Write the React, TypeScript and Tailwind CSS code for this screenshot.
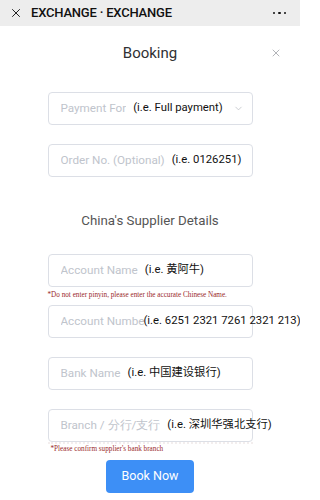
import { ChevronDown, X } from "lucide-react";

type Field = {
  label: string;
  hint: string;
  labelWidth?: string;
  gap?: string;
  chevron?: boolean;
  note?: string;
  top: string;
};

const ORDER_FIELDS: Field[] = [
  { label: "Payment For", hint: "(i.e. Full payment)", chevron: true, top: "mt-[28px]" },
  { label: "Order No. (Optional)", hint: "(i.e. 0126251)", top: "mt-[19px]" },
];

const SUPPLIER_FIELDS: Field[] = [
  {
    label: "Account Name",
    hint: "(i.e. 黄阿牛)",
    note: "*Do not enter pinyin, please enter the accurate Chinese Name.",
    top: "mt-[23px]",
  },
  {
    label: "Account Number",
    hint: "(i.e. 6251 2321 7261 2321 213)",
    labelWidth: "w-[83px]",
    gap: "ml-0",
    top: "mt-[5px]",
  },
  { label: "Bank Name", hint: "(i.e. 中国建设银行)", top: "mt-[19px]" },
  { label: "Branch / 分行/支行", hint: "(i.e. 深圳华强北支行)", top: "mt-[19px]" },
];

function InputRow({ field }: { field: Field }) {
  return (
    <div className={`${field.top} w-[205px]`}>
      <div className="relative flex h-[33px] items-center rounded-[4px] border border-[#dcdfe6] bg-white pl-[12px]">
        <span
          className={`shrink-0 overflow-hidden whitespace-nowrap text-[11.7px] text-[#c0c4cc] ${field.labelWidth ?? ""}`}
        >
          {field.label}
        </span>
        <span
          className={`${field.gap ?? "ml-[7px]"} whitespace-nowrap font-['Roboto','Noto_Sans_CJK_SC',sans-serif] text-[11.3px] text-[#111]`}
        >
          {field.hint}
        </span>
        {field.chevron && (
          <ChevronDown className="ml-auto mr-[8px] h-[11px] w-[11px] text-[#b4b7bd]" strokeWidth={1.5} />
        )}
      </div>
      {field.note && (
        <p className="mt-[3px] whitespace-nowrap font-['Liberation_Serif',serif] text-[7.2px] leading-[10px] text-[#9a2a2a]">
          {field.note}
        </p>
      )}
    </div>
  );
}

export default function App() {
  return (
    <div className="relative h-[500px] w-[300px] overflow-hidden bg-white font-['Roboto',sans-serif]">
      {/* Top bar */}
      <header className="flex h-[26px] items-center bg-[#ededed] pl-[9px] pr-[14px]">
        <X className="h-[14px] w-[14px] text-[#111]" strokeWidth={1.6} />
        <span className="ml-[8px] text-[13px] font-medium tracking-[-0.2px] text-[#111]">
          EXCHANGE · EXCHANGE
        </span>
        <span className="ml-auto flex gap-[3px]">
          <span className="h-[2.5px] w-[2.5px] rounded-full bg-[#111]" />
          <span className="h-[2.5px] w-[2.5px] rounded-full bg-[#111]" />
          <span className="h-[2.5px] w-[2.5px] rounded-full bg-[#111]" />
        </span>
      </header>

      {/* Modal */}
      <main className="flex flex-col items-center">
        <div className="relative mt-[14px] flex h-[24px] w-full items-center justify-center">
          <h1 className="mt-[2px] text-[15px] text-[#303133]">Booking</h1>
          <X className="absolute right-[18px] top-[7px] h-[12px] w-[12px] text-[#909399]" strokeWidth={1.4} />
        </div>

        {ORDER_FIELDS.map((f) => (
          <InputRow key={f.label} field={f} />
        ))}

        <h2 className="mt-[34px] text-[13.3px] leading-[20px] text-[#555]">China&apos;s Supplier Details</h2>

        {SUPPLIER_FIELDS.map((f) => (
          <InputRow key={f.label} field={f} />
        ))}

        <div className="w-[205px] border-t-2 border-dotted border-[#f3eeee]">
          <p className="ml-[3px] whitespace-nowrap font-['Liberation_Serif',serif] text-[7.2px] leading-[10px] text-[#9a2a2a]">
            *Please confirm supplier&apos;s bank branch
          </p>
        </div>

        <button
          type="button"
          className="mt-[6px] h-[33px] w-[88px] rounded-[4px] bg-[#3d8ff6] text-[12.5px] text-white"
        >
          Book Now
        </button>
      </main>
    </div>
  );
}
